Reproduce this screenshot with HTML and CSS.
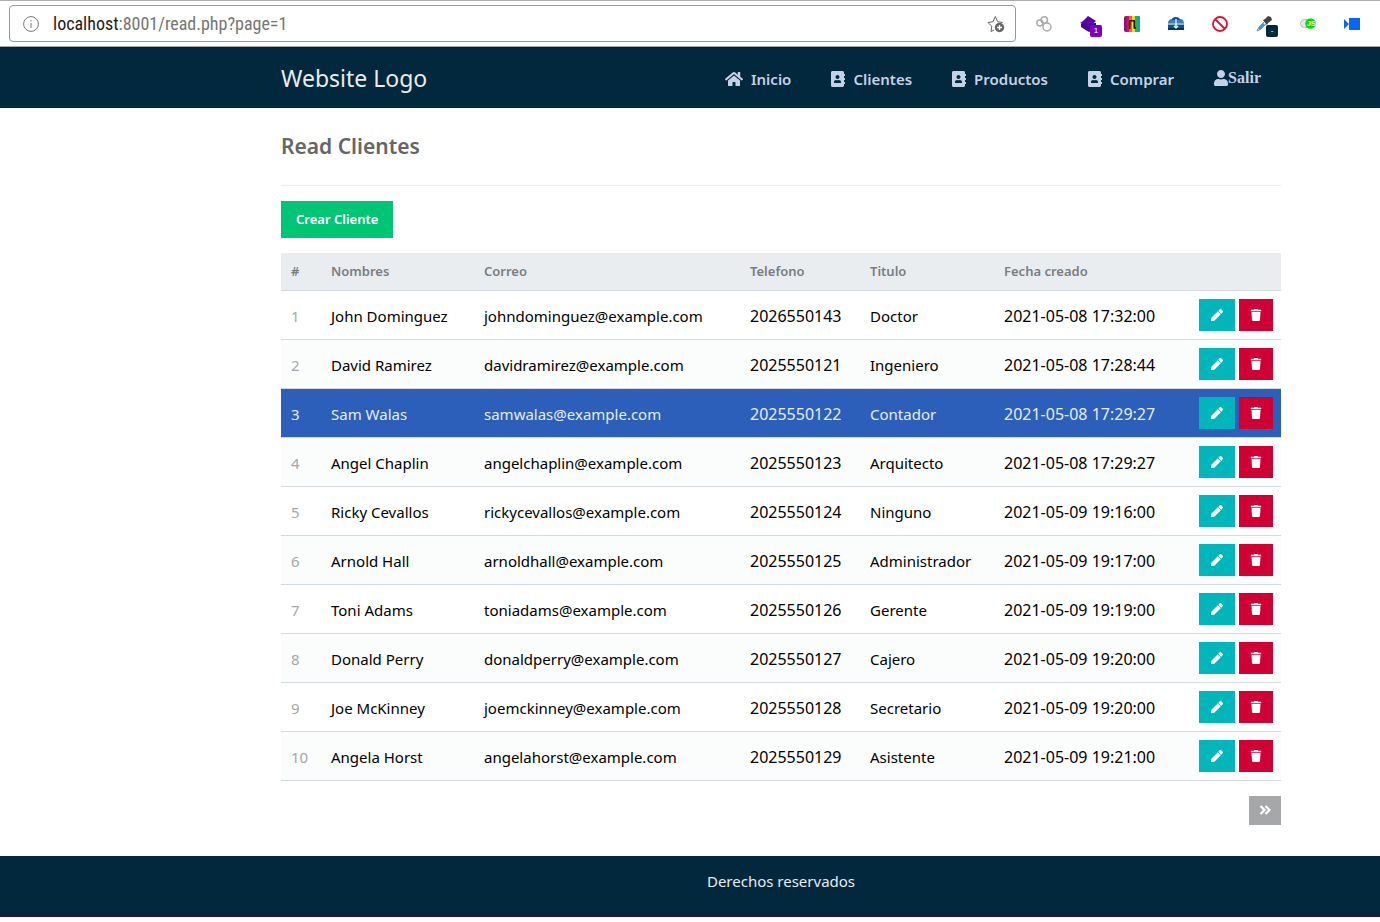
FILE: index.html
```html
<!DOCTYPE html>
<html lang="es">
<head>
    <meta charset="UTF-8">
    <meta name="viewport" content="width=device-width, initial-scale=1.0">
    <title>Read Clientes</title>
    <link rel="stylesheet" href="styles.css">
</head>
<body>
    <!-- Icons -->
    <svg class="sprite" aria-hidden="true">
        <symbol id="home" viewBox="0 0 576 512"><path d="M280.37 148.26L96 300.11V464a16 16 0 0 0 16 16l112.06-.29a16 16 0 0 0 15.92-16V368a16 16 0 0 1 16-16h64a16 16 0 0 1 16 16v95.64a16 16 0 0 0 16 16.05L464 480a16 16 0 0 0 16-16V300L295.67 148.26a12.19 12.19 0 0 0-15.3 0zM571.6 251.47L488 182.56V44.05a12 12 0 0 0-12-12h-56a12 12 0 0 0-12 12v72.61L318.47 43a48 48 0 0 0-61 0L4.34 251.47a12 12 0 0 0-1.6 16.9l25.5 31A12 12 0 0 0 45.15 301l235.22-193.74a12.19 12.19 0 0 1 15.3 0L530.9 301a12 12 0 0 0 16.9-1.6l25.5-31a12 12 0 0 0-1.7-16.93z"/></symbol>
        <symbol id="book" viewBox="0 0 448 512"><path d="M436 160c6.6 0 12-5.4 12-12v-40c0-6.6-5.4-12-12-12h-20V48c0-26.5-21.5-48-48-48H48C21.5 0 0 21.5 0 48v416c0 26.5 21.5 48 48 48h320c26.5 0 48-21.5 48-48v-48h20c6.6 0 12-5.4 12-12v-40c0-6.6-5.4-12-12-12h-20v-64h20c6.6 0 12-5.4 12-12v-40c0-6.6-5.4-12-12-12h-20v-64h20zm-228-32c35.3 0 64 28.7 64 64s-28.7 64-64 64-64-28.7-64-64 28.7-64 64-64zm112 236.8c0 10.6-10 19.2-22.4 19.2H118.4C106 384 96 375.4 96 364.8v-19.2c0-31.8 30.1-57.6 67.2-57.6h5c12.3 5.1 25.7 8 39.8 8s27.6-2.9 39.8-8h5c37.1 0 67.2 25.8 67.2 57.6v19.2z"/></symbol>
        <symbol id="user" viewBox="0 0 448 512"><path d="M224 256c70.7 0 128-57.3 128-128S294.7 0 224 0 96 57.3 96 128s57.3 128 128 128zm89.6 32h-16.7c-22.2 10.2-46.9 16-72.9 16s-50.6-5.8-72.9-16h-16.7C60.2 288 0 348.2 0 422.4V464c0 26.5 21.5 48 48 48h352c26.5 0 48-21.5 48-48v-41.6c0-74.2-60.2-134.4-134.4-134.4z"/></symbol>
        <symbol id="pen" viewBox="0 0 512 512"><path d="M290.74 93.24l128.02 128.02-277.99 277.99-114.14 12.6C11.35 513.54-1.56 500.62.14 485.34l12.7-114.22 277.9-277.88zm207.2-19.06l-60.11-60.11c-18.75-18.75-49.16-18.75-67.91 0l-56.55 56.55 128.02 128.02 56.55-56.55c18.75-18.76 18.75-49.16 0-67.91z"/></symbol>
        <symbol id="trash" viewBox="0 0 448 512"><path d="M432 32H312l-9.4-18.7A24 24 0 0 0 281.1 0H166.8a23.72 23.72 0 0 0-21.4 13.3L136 32H16A16 16 0 0 0 0 48v32a16 16 0 0 0 16 16h416a16 16 0 0 0 16-16V48a16 16 0 0 0-16-16zM53.2 467a48 48 0 0 0 47.9 45h245.8a48 48 0 0 0 47.9-45L416 128H32z"/></symbol>
    </svg>

    <!-- Browser bar -->
    <div class="browser">
        <div class="address">
            <svg class="info" width="16" height="16" viewBox="0 0 16 16"><circle cx="8" cy="8" r="7.4"/><path d="M8 7v5M8 4v1.5"/></svg>
            <label class="host" for="url">localhost</label>
            <input class="url" id="url" type="text" value=":8001/read.php?page=1">
            <button class="star" aria-label="Favorito">
                <svg width="18" height="18" viewBox="0 0 18 18"><path d="M7 15l-3 1.500 .7-5.300L1 7.500l5-.8L8.300 1.500l2.400 5.200 5 .8" fill="none" stroke="#666"/><circle cx="12.500" cy="12.500" r="4.700" fill="#666"/><path d="M12.500 10v5M10 12.500h5" stroke="#fff" stroke-width="1.300"/></svg>
            </button>
        </div>
        <div class="extensions">
            <button class="ext" aria-label="Enlaces">
                <svg width="16" height="16" viewBox="0 0 16 16" fill="none" stroke="#aaa" stroke-width="1.500"><circle cx="3.800" cy="7" r="3"/><circle cx="8.300" cy="4" r="3.200"/><circle cx="11" cy="11" r="4"/></svg>
            </button>
            <button class="ext" aria-label="Capas">
                <svg width="16" height="16" viewBox="0 0 16 16"><path d="M1 8v3l8 5 7-5V7z" fill="#3c0082"/><path d="M1 9l8 5 6-4" fill="none" stroke="#5a0aa8"/><path d="M8 0l8 5-7 6-9-4 3-2z" fill="#5b00ab"/></svg>
                <span class="badge purple">1</span>
            </button>
            <button class="ext" aria-label="Colores">
                <svg width="16" height="16" viewBox="0 0 16 16"><rect width="16" height="16" rx="2" fill="#8d1281"/><path d="M3 0h3v16H3z" fill="#e0104a"/><path d="M5 0h3v16H5z" fill="#f4602a"/><path d="M8 0h3v16H8z" fill="#f2d635"/><path d="M11 0h2v16h-2z" fill="#27b24a"/><path d="M13 0h1a2 2 0 0 1 2 2v12a2 2 0 0 1-2 2h-1z" fill="#13ad8b"/><path d="M5.700 13V4.700h4.600V12H12" fill="none" stroke="#16130e" stroke-width="1.500"/></svg>
            </button>
            <button class="ext" aria-label="Descargas">
                <svg width="16" height="16" viewBox="0 0 16 16"><path d="M0 8c0-4 2-5 4-5 2-3 7-2 8 0 3 0 4 2 4 5z" fill="#3c80b4"/><path d="M4 3c2-3 7-2 8 1H4z" fill="#1c46c0"/><path d="M0 7h16v7H0z" fill="#17517f"/><path d="M0 7h16v2H0z" fill="#7db4d6"/><path d="M0 12h16v2H0z" fill="#0c2e50"/><path d="M8 3v9M6 10l2 2 2-2" fill="none" stroke="#d5f2ff" stroke-width="1.500"/></svg>
            </button>
            <button class="ext" aria-label="Bloquear">
                <svg width="16" height="16" viewBox="0 0 16 16" fill="none" stroke="#dc1431" stroke-width="1.800"><circle cx="8" cy="8" r="7"/><path d="M3 3l10 10"/></svg>
            </button>
            <button class="ext" aria-label="Cuentagotas">
                <svg width="16" height="16" viewBox="0 0 16 16"><path d="M9 5L3 11l-2 4 4-2 6-6z" fill="#d8e4ec" stroke="#888"/><path d="M3 13l5-5" stroke="#2f8fe0" stroke-width="2"/><path d="M7 4l2-1 3-3 3 1 1 3-4 3-1 2z" fill="#444"/></svg>
                <span class="badge dark">-</span>
            </button>
            <button class="ext" aria-label="JavaScript">
                <svg width="16" height="16" viewBox="0 0 16 16"><rect x=".5" y="3.500" width="13" height="8" rx="4" fill="#e8e8e8" stroke="#bbb"/><circle cx="10.500" cy="7.500" r="5.300" fill="#0bd80f"/><text class="js" x="7" y="10">JS</text></svg>
            </button>
            <button class="ext" aria-label="Video">
                <svg width="16" height="12" viewBox="0 0 16 12" fill="#0866f5"><path d="M0 1l5 5-5 5zM5 0h11v12H5z"/></svg>
            </button>
        </div>
    </div>

    <!-- Navigation -->
    <nav class="navtop">
        <div class="container">
            <h1>Website Logo</h1>
            <a href="#"><svg class="icon wide"><use href="#home"/></svg>Inicio</a>
            <a href="#"><svg class="icon"><use href="#book"/></svg>Clientes</a>
            <a href="#"><svg class="icon"><use href="#book"/></svg>Productos</a>
            <a href="#"><svg class="icon"><use href="#book"/></svg>Comprar</a>
            <a href="#" class="logout"><svg class="icon"><use href="#user"/></svg>Salir</a>
        </div>
    </nav>

    <!-- Client list -->
    <main class="content">
        <div class="container">
            <h2>Read Clientes</h2>
            <a href="#" class="create">Crear Cliente</a>
            <table>
                <thead>
                    <tr>
                        <th class="col-id">#</th>
                        <th class="col-name">Nombres</th>
                        <th class="col-mail">Correo</th>
                        <th class="col-phone">Telefono</th>
                        <th class="col-title">Titulo</th>
                        <th>Fecha creado</th>
                        <th></th>
                    </tr>
                </thead>
                <tbody>
                    <tr>
                        <td>1</td><td>John Dominguez</td><td>johndominguez@example.com</td><td class="num">2026550143</td><td>Doctor</td><td class="num">2021-05-08 17:32:00</td>
                        <td class="actions"><a href="#" class="edit" aria-label="Editar"><svg><use href="#pen"/></svg></a><a href="#" class="trash" aria-label="Borrar"><svg><use href="#trash"/></svg></a></td>
                    </tr>
                    <tr>
                        <td>2</td><td>David Ramirez</td><td>davidramirez@example.com</td><td class="num">2025550121</td><td>Ingeniero</td><td class="num">2021-05-08 17:28:44</td>
                        <td class="actions"><a href="#" class="edit" aria-label="Editar"><svg><use href="#pen"/></svg></a><a href="#" class="trash" aria-label="Borrar"><svg><use href="#trash"/></svg></a></td>
                    </tr>
                    <tr class="active">
                        <td>3</td><td>Sam Walas</td><td>samwalas@example.com</td><td class="num">2025550122</td><td>Contador</td><td class="num">2021-05-08 17:29:27</td>
                        <td class="actions"><a href="#" class="edit" aria-label="Editar"><svg><use href="#pen"/></svg></a><a href="#" class="trash" aria-label="Borrar"><svg><use href="#trash"/></svg></a></td>
                    </tr>
                    <tr>
                        <td>4</td><td>Angel Chaplin</td><td>angelchaplin@example.com</td><td class="num">2025550123</td><td>Arquitecto</td><td class="num">2021-05-08 17:29:27</td>
                        <td class="actions"><a href="#" class="edit" aria-label="Editar"><svg><use href="#pen"/></svg></a><a href="#" class="trash" aria-label="Borrar"><svg><use href="#trash"/></svg></a></td>
                    </tr>
                    <tr>
                        <td>5</td><td>Ricky Cevallos</td><td>rickycevallos@example.com</td><td class="num">2025550124</td><td>Ninguno</td><td class="num">2021-05-09 19:16:00</td>
                        <td class="actions"><a href="#" class="edit" aria-label="Editar"><svg><use href="#pen"/></svg></a><a href="#" class="trash" aria-label="Borrar"><svg><use href="#trash"/></svg></a></td>
                    </tr>
                    <tr>
                        <td>6</td><td>Arnold Hall</td><td>arnoldhall@example.com</td><td class="num">2025550125</td><td>Administrador</td><td class="num">2021-05-09 19:17:00</td>
                        <td class="actions"><a href="#" class="edit" aria-label="Editar"><svg><use href="#pen"/></svg></a><a href="#" class="trash" aria-label="Borrar"><svg><use href="#trash"/></svg></a></td>
                    </tr>
                    <tr>
                        <td>7</td><td>Toni Adams</td><td>toniadams@example.com</td><td class="num">2025550126</td><td>Gerente</td><td class="num">2021-05-09 19:19:00</td>
                        <td class="actions"><a href="#" class="edit" aria-label="Editar"><svg><use href="#pen"/></svg></a><a href="#" class="trash" aria-label="Borrar"><svg><use href="#trash"/></svg></a></td>
                    </tr>
                    <tr>
                        <td>8</td><td>Donald Perry</td><td>donaldperry@example.com</td><td class="num">2025550127</td><td>Cajero</td><td class="num">2021-05-09 19:20:00</td>
                        <td class="actions"><a href="#" class="edit" aria-label="Editar"><svg><use href="#pen"/></svg></a><a href="#" class="trash" aria-label="Borrar"><svg><use href="#trash"/></svg></a></td>
                    </tr>
                    <tr>
                        <td>9</td><td>Joe McKinney</td><td>joemckinney@example.com</td><td class="num">2025550128</td><td>Secretario</td><td class="num">2021-05-09 19:20:00</td>
                        <td class="actions"><a href="#" class="edit" aria-label="Editar"><svg><use href="#pen"/></svg></a><a href="#" class="trash" aria-label="Borrar"><svg><use href="#trash"/></svg></a></td>
                    </tr>
                    <tr>
                        <td>10</td><td>Angela Horst</td><td>angelahorst@example.com</td><td class="num">2025550129</td><td>Asistente</td><td class="num">2021-05-09 19:21:00</td>
                        <td class="actions"><a href="#" class="edit" aria-label="Editar"><svg><use href="#pen"/></svg></a><a href="#" class="trash" aria-label="Borrar"><svg><use href="#trash"/></svg></a></td>
                    </tr>
                </tbody>
            </table>
            <div class="pagination">
                <a href="#" aria-label="Siguiente"><svg width="12" height="10" viewBox="0 0 12 10"><path d="M1.500 1l4 4-4 4M6.500 1l4 4-4 4" fill="none" stroke="#fff" stroke-width="2.200"/></svg></a>
            </div>
        </div>
    </main>

    <footer class="footer">Derechos reservados</footer>
</body>
</html>
```

FILE: styles.css
```css
* {
    box-sizing: border-box;
}

body {
    margin: 0;
    background-color: #ffffff;
    font-family: "Noto Sans", "Open Sans", sans-serif;
    font-size: 15px;
}

a {
    text-decoration: none;
}

button {
    border: none;
    background: none;
    padding: 0;
}

.sprite {
    display: none;
}

/* Browser bar */
.browser {
    display: flex;
    gap: 6px;
    height: 47px;
    padding: 4px 6px 4px 9px;
    border-top: 1px solid #b0acae;
    border-bottom: 1px solid #a9a5a8;
}

.address {
    display: flex;
    flex: 1;
    align-items: center;
    height: 37px;
    padding: 0 10px 0 13px;
    border: 1px solid #99969a;
    border-radius: 4px;
    font-family: "Roboto Condensed", "Liberation Sans Narrow", Roboto, sans-serif;
    font-size: 18px;
}

.info {
    margin-right: 14px;
    fill: none;
    stroke: #777777;
}

.host {
    color: #1b1b1b;
}

.url {
    flex: 1;
    min-width: 0;
    padding: 0;
    border: none;
    outline: none;
    background: none;
    font: inherit;
    color: #767676;
}

.star {
    display: flex;
}

.extensions {
    display: flex;
}

.ext {
    position: relative;
    display: flex;
    align-items: center;
    justify-content: center;
    width: 44px;
    height: 37px;
}

.badge {
    position: absolute;
    right: 8px;
    bottom: 5px;
    width: 12px;
    height: 12px;
    border-radius: 2px;
    color: #ffffff;
    font-size: 8px;
    line-height: 12px;
}

.purple {
    background-color: #7b00bd;
}

.dark {
    background-color: #02283d;
}

.js {
    fill: #ffffff;
    font-size: 7px;
    font-weight: bold;
}

/* Page */
.navtop,
.content,
.footer {
    padding-left: 182px;
}

.container {
    max-width: 1000px;
    margin: 0 auto;
}

.navtop {
    height: 61px;
    background-color: #02283d;
    border-top: 1px solid #3a0a1e;
}

.navtop .container {
    display: flex;
    align-items: center;
    height: 100%;
}

.navtop h1 {
    flex: 1;
    margin: 0;
    font-size: 23px;
    font-weight: normal;
    color: #eaebed;
}

.navtop a {
    display: flex;
    align-items: center;
    padding: 2px 20px 0;
    font-weight: 600;
    color: #c4d2e8;
}

.navtop .logout {
    padding-top: 0;
    font-family: "Liberation Serif", serif;
    font-size: 16px;
    font-weight: bold;
}

.icon {
    width: 14px;
    height: 16px;
    margin-right: 8px;
    fill: currentColor;
}

.wide {
    width: 18px;
}

.logout .icon {
    margin-right: 0;
}

.content h2 {
    margin: 0 0 15px;
    padding: 23px 0 24px;
    border-bottom: 1px solid #ebebeb;
    font-size: 21px;
    font-weight: 600;
    line-height: 30px;
    color: #666666;
}

.create {
    display: inline-block;
    padding: 0 15px;
    background-color: #00c575;
    color: #ffffff;
    font-size: 13px;
    font-weight: 600;
    line-height: 37px;
    vertical-align: top;
}

table {
    width: 100%;
    margin-top: 15px;
    border-collapse: collapse;
    table-layout: fixed;
}

tr {
    border-bottom: 1px solid #d3dae0;
}

th {
    height: 37px;
    padding: 0 10px;
    background-color: #e9edf0;
    color: #7a7d80;
    font-size: 13px;
    font-weight: 600;
    text-align: left;
}

.col-id {
    width: 40px;
}

.col-name {
    width: 153px;
}

.col-mail {
    width: 266px;
}

.col-phone {
    width: 120px;
}

.col-title {
    width: 134px;
}

td {
    height: 49px;
    padding: 2px 10px 0;
    color: #000000;
    white-space: nowrap;
}

td:first-child {
    color: #a5a7a9;
}

.num {
    font-size: 16px;
}

tbody tr:nth-child(even) {
    background-color: #fbfcfc;
}

tbody .active {
    background-color: #2c5fb9;
}

.active td,
.active td:first-child {
    color: #e6ecf8;
}

.actions {
    padding: 0 8px;
    font-size: 0;
    text-align: right;
}

.edit,
.trash {
    display: inline-flex;
    align-items: center;
    justify-content: center;
    width: 36px;
    height: 32px;
    margin-left: 4px;
    background-color: #00b6bb;
    vertical-align: middle;
}

.trash {
    width: 34px;
    background-color: #cf0134;
}

.actions svg {
    width: 12px;
    height: 12px;
    fill: #ffffff;
}

.pagination {
    display: flex;
    justify-content: flex-end;
    padding: 15px 0 31px;
}

.pagination a {
    display: flex;
    align-items: center;
    justify-content: center;
    width: 32px;
    height: 29px;
    background-color: #a5a7a9;
}

.footer {
    height: 61px;
    padding-top: 15px;
    background-color: #02283d;
    border-bottom: 1px solid #4a0a20;
    color: #eaebed;
    text-align: center;
}
```
